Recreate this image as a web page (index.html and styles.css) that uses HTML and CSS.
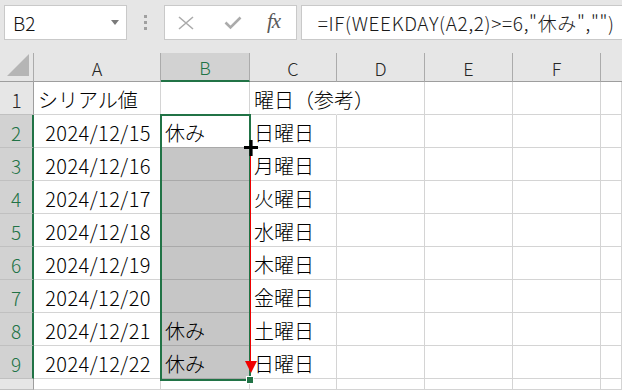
FILE: index.html
```html
<!DOCTYPE html>
<html lang="ja">
<head>
<meta charset="utf-8">
<link rel="stylesheet" href="styles.css">
</head>
<body>
<div class="toolbar">
  <div class="namebox"><span class="nb-text">B2</span><svg class="nb-arrow" width="8" height="5" viewBox="0 0 8 5"><path d="M0 0H8L4 5Z" fill="#7a7a7a"/></svg></div>
  <div class="dots"><i></i><i></i><i></i></div>
  <div class="btnbox">
    <svg class="ico-x" width="16" height="14" viewBox="0 0 16 14"><path d="M1 1L15 13M15 1L1 13" stroke="#ababab" stroke-width="1.6" fill="none"/></svg>
    <svg class="ico-check" width="18" height="14" viewBox="0 0 18 14"><path d="M1.5 6.5L6.5 11.5L16.5 1.5" stroke="#ababab" stroke-width="2.6" fill="none"/></svg>
    <span class="fx">fx</span>
  </div>
  <div class="formula">=IF(WEEKDAY(A2,2)&gt;=6,"休み","")</div>
</div>
<div class="gap"></div>
<div class="sheet">
  <div class="hd corner"><svg width="24" height="24" viewBox="0 0 24 24"><path d="M23 1V23H1Z" fill="#b5b5b5"/></svg></div>
  <div class="hd col">A</div>
  <div class="hd col sel">B</div>
  <div class="hd col">C</div>
  <div class="hd col">D</div>
  <div class="hd col">E</div>
  <div class="hd col">F</div>
  <div class="hd col last"></div>

  <div class="hd row">1</div>
  <div class="c">シリアル値</div>
  <div class="c"></div>
  <div class="c nob">曜日（参考）</div>
  <div class="c"></div><div class="c"></div><div class="c"></div><div class="c"></div>

  <div class="hd row rsel">2</div>
  <div class="c num">2024/12/15</div>
  <div class="c active">休み</div>
  <div class="c">日曜日</div>
  <div class="c"></div><div class="c"></div><div class="c"></div><div class="c"></div>

  <div class="hd row rsel">3</div>
  <div class="c num">2024/12/16</div>
  <div class="c fill"></div>
  <div class="c">月曜日</div>
  <div class="c"></div><div class="c"></div><div class="c"></div><div class="c"></div>

  <div class="hd row rsel">4</div>
  <div class="c num">2024/12/17</div>
  <div class="c fill"></div>
  <div class="c">火曜日</div>
  <div class="c"></div><div class="c"></div><div class="c"></div><div class="c"></div>

  <div class="hd row rsel">5</div>
  <div class="c num">2024/12/18</div>
  <div class="c fill"></div>
  <div class="c">水曜日</div>
  <div class="c"></div><div class="c"></div><div class="c"></div><div class="c"></div>

  <div class="hd row rsel">6</div>
  <div class="c num">2024/12/19</div>
  <div class="c fill"></div>
  <div class="c">木曜日</div>
  <div class="c"></div><div class="c"></div><div class="c"></div><div class="c"></div>

  <div class="hd row rsel">7</div>
  <div class="c num">2024/12/20</div>
  <div class="c fill"></div>
  <div class="c">金曜日</div>
  <div class="c"></div><div class="c"></div><div class="c"></div><div class="c"></div>

  <div class="hd row rsel">8</div>
  <div class="c num">2024/12/21</div>
  <div class="c fill">休み</div>
  <div class="c">土曜日</div>
  <div class="c"></div><div class="c"></div><div class="c"></div><div class="c"></div>

  <div class="hd row rsel">9</div>
  <div class="c num">2024/12/22</div>
  <div class="c fill">休み</div>
  <div class="c">日曜日</div>
  <div class="c"></div><div class="c"></div><div class="c"></div><div class="c"></div>

  <div class="hd row"></div>
  <div class="c"></div><div class="c"></div><div class="c"></div><div class="c"></div><div class="c"></div><div class="c"></div><div class="c"></div>

  <div class="selection"></div>
  <div class="redline"></div>
  <svg class="redarrow" width="12" height="12" viewBox="0 0 12 12"><path d="M0 0H12L6 12Z" fill="#f00000"/></svg>
  <div class="handle"></div>
  <svg class="plus" width="16" height="18" viewBox="0 0 16 18"><path d="M1 8.5H15M8 1V17" stroke="#000" stroke-width="3.2" fill="none"/></svg>
</div>
</body>
</html>
```
FILE: styles.css
```css
html, body {
  margin: 0;
  padding: 0;
  background: #e6e6e6;
  overflow: hidden;
}
body {
  width: 622px;
  height: 390px;
  font-family: "Noto Sans CJK JP", "Noto Sans", sans-serif;
  font-weight: 300;
  color: #000;
}
.toolbar {
  height: 40px;
  display: flex;
  align-items: flex-start;
  padding: 5px 0 0 4px;
  box-sizing: border-box;
}
.namebox {
  width: 126px;
  height: 35px;
  box-sizing: border-box;
  background: #fff;
  border: 1px solid #c9c9c9;
  display: flex;
  align-items: center;
  padding: 0 7px 0 8px;
}
.nb-text {
  flex: 1;
  font-size: 19px;
  color: #111;
  line-height: 1;
}
.nb-arrow { display: block; }
.dots {
  width: 38px;
  height: 35px;
  display: flex;
  flex-direction: column;
  align-items: center;
  justify-content: center;
  gap: 3px;
}
.dots i {
  display: block;
  width: 3px;
  height: 3px;
  background: #a0a0a0;
}
.btnbox {
  width: 136px;
  height: 35px;
  box-sizing: border-box;
  background: #fff;
  border: 1px solid #c9c9c9;
  display: flex;
  align-items: center;
  padding-left: 13px;
}
.ico-x { margin-right: 30px; display: block; }
.ico-check { margin-right: 25px; display: block; }
.fx {
  font-family: "Liberation Serif", "DejaVu Serif", serif;
  font-style: italic;
  font-weight: 400;
  font-size: 21px;
  color: #5a5a5a;
  line-height: 1;
  margin-top: -3px;
  letter-spacing: -1px;
}
.formula {
  margin-left: 4px;
  width: 330px;
  height: 35px;
  box-sizing: border-box;
  background: #fff;
  border: 1px solid #c9c9c9;
  border-right: none;
  padding-left: 16px;
  font-size: 19px;
  letter-spacing: 0.65px;
  line-height: 33px;
  color: #1a1a1a;
  white-space: nowrap;
}
.gap { height: 13px; }
.sheet {
  position: relative;
  display: grid;
  grid-template-columns: 34px 127px 89px 87px 88px 88px 88px 21px;
  grid-template-rows: 29px repeat(9, 33px) 11px;
  background: #fff;
  height: 337px;
  overflow: hidden;
}
.hd {
  background: #e6e6e6;
  box-sizing: border-box;
  display: flex;
  align-items: center;
  justify-content: center;
  color: #262626;
}
.corner {
  border-right: 1px solid #ababab;
  border-bottom: 1px solid #9e9e9e;
  justify-content: flex-end;
  align-items: flex-end;
  padding: 0 3px 4px 0;
}
.corner svg { display: block; }
.col {
  font-size: 18px;
  border-right: 1px solid #ababab;
  border-bottom: 1px solid #9e9e9e;
  padding-top: 1px;
}
.col.last { border-right: none; }
.col.sel {
  background: #d2d2d2;
  color: #217346;
  border-bottom: 2px solid #217346;
}
.row {
  font-size: 19px;
  border-right: 1px solid #9e9e9e;
  border-bottom: 1px solid #c0c0c0;
  padding-top: 2px;
}
.row.rsel {
  background: #d2d2d2;
  color: #217346;
  border-right: 2px solid #217346;
}
.c {
  box-sizing: border-box;
  border-right: 1px solid #d4d4d4;
  border-bottom: 1px solid #d4d4d4;
  font-size: 20px;
  display: flex;
  align-items: center;
  padding: 2px 0 0 4px;
  white-space: nowrap;
  overflow: visible;
}
.c.nob { border-right-color: transparent; }
.c.num {
  justify-content: flex-end;
  padding-right: 9px;
  letter-spacing: 0.45px;
}
.c.fill {
  background: #c6c6c6;
  border-bottom-color: #a9a9a9;
}
.c.active { border-bottom-color: #a9a9a9; }
.selection {
  position: absolute;
  left: 160px;
  top: 61px;
  width: 91px;
  height: 267px;
  box-sizing: border-box;
  border: 2px solid #217346;
}
.redline {
  position: absolute;
  left: 250px;
  top: 102px;
  width: 1px;
  height: 208px;
  background: #ee0000;
}
.redarrow {
  position: absolute;
  left: 245px;
  top: 308px;
}
.handle {
  position: absolute;
  left: 246px;
  top: 323px;
  width: 6px;
  height: 6px;
  background: #217346;
  border: 1px solid #fff;
}
.plus {
  position: absolute;
  left: 243px;
  top: 86px;
}
```
